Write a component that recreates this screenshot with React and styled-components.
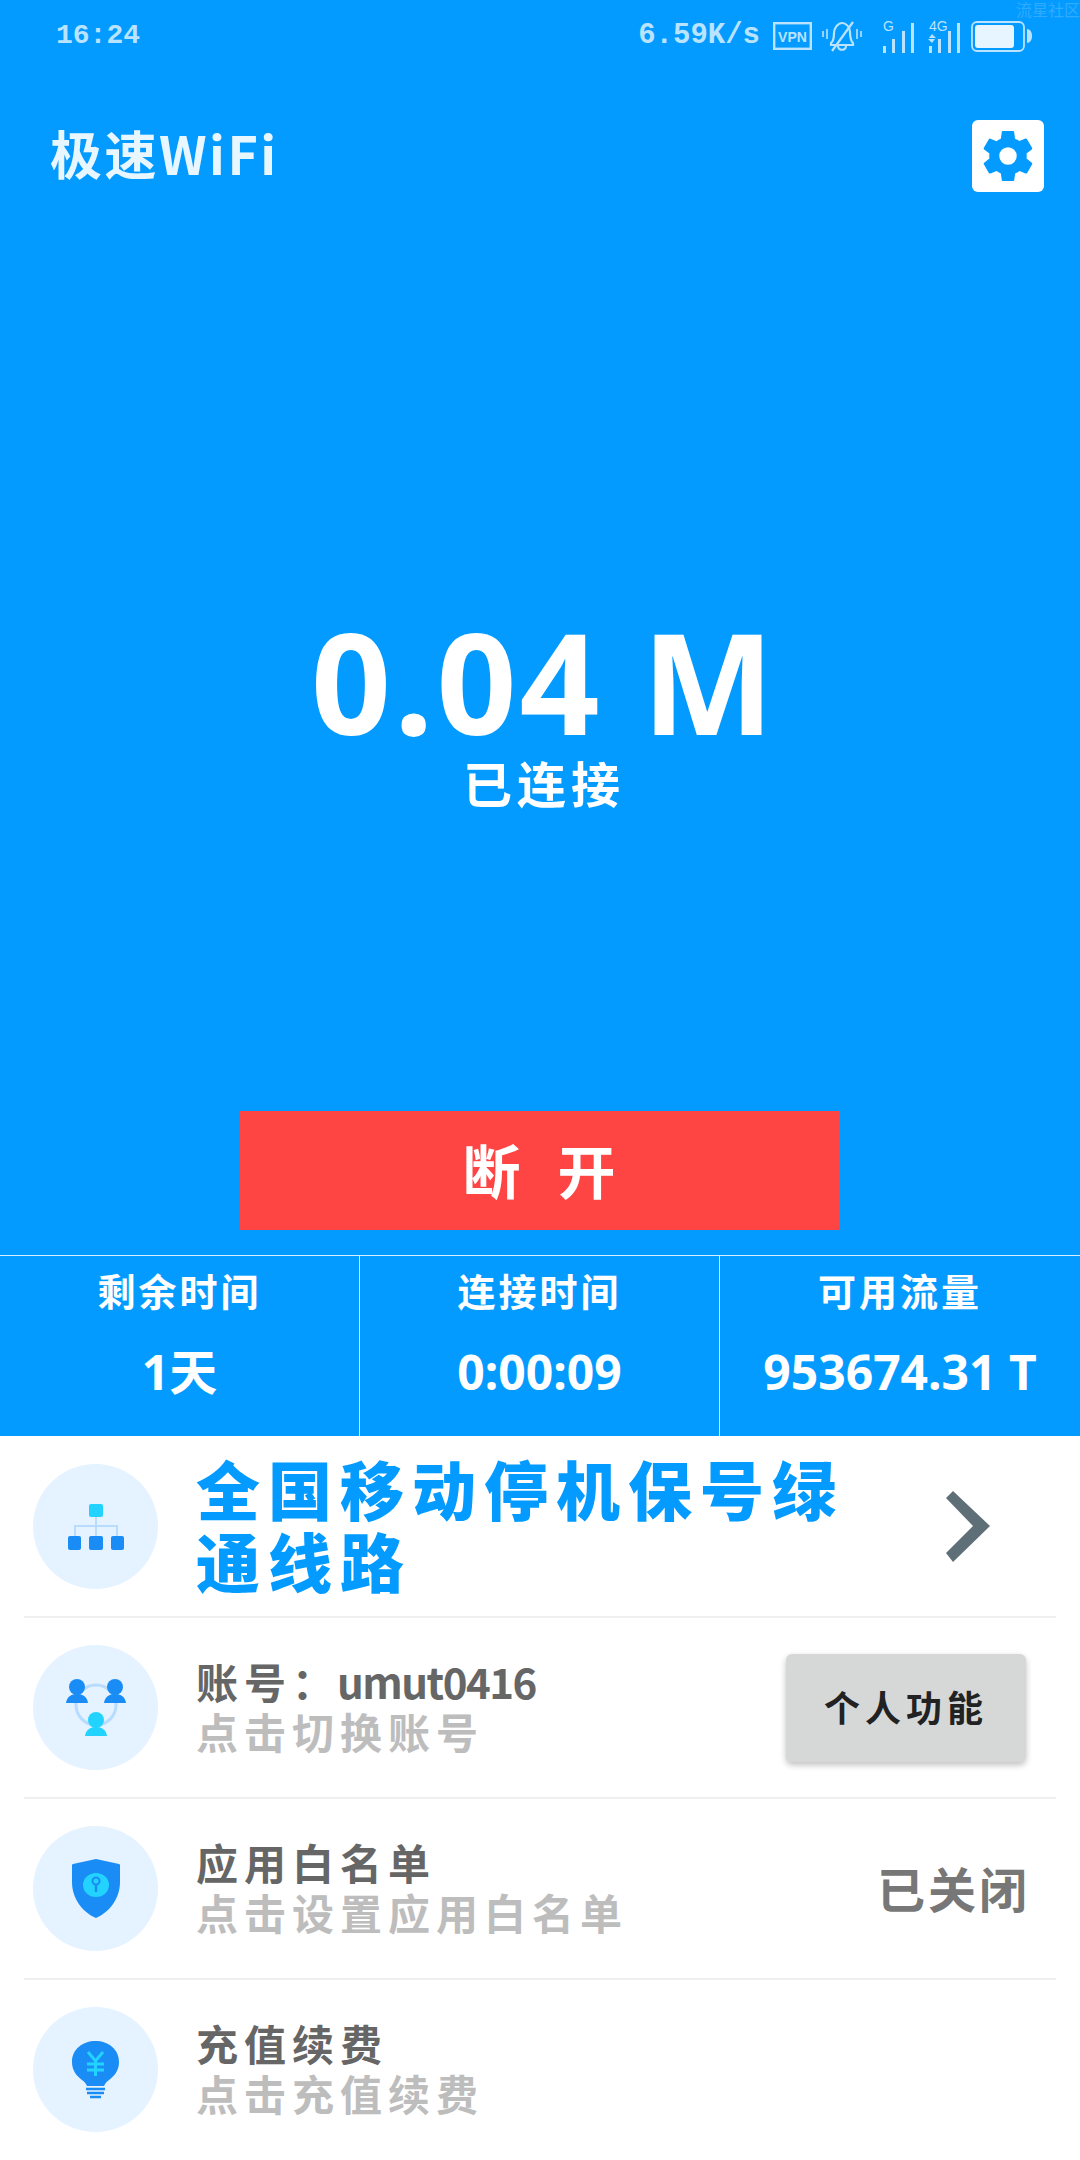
import React from 'react'
import styled, { createGlobalStyle } from 'styled-components'

const CJK = '"Noto Sans CJK SC", "Noto Sans", sans-serif'

const GlobalStyle = createGlobalStyle`
    html, body {
        margin: 0;
        padding: 0;
        background: #ffffff;
    }
    * {
        box-sizing: border-box;
    }
`

const Page = styled.div`
    width: 1080px;
    height: 2160px;
    display: flex;
    flex-direction: column;
    position: relative;
    overflow: hidden;
    font-family: ${CJK};
    background: #ffffff;
`

const Hero = styled.section`
    height: 1436px;
    flex: none;
    display: flex;
    flex-direction: column;
    background: #039bff;
    color: #ffffff;
`

const Watermark = styled.span`
    position: absolute;
    top: 0;
    right: 0;
    font-size: 16px;
    line-height: 18px;
    color: #2fabff;
`

const StatusBar = styled.div`
    height: 70px;
    flex: none;
    display: flex;
    align-items: center;
    justify-content: space-between;
    padding: 2px 48px 0 56px;
    color: #b9e3ff;
`

const StatusText = styled.span`
    font-family: "Liberation Mono", monospace;
    font-weight: 700;
    font-size: ${p => p.$size || 28}px;
    line-height: 34px;
    margin-right: ${p => p.$gap || 0}px;
`

const StatusIcons = styled.div`
    display: flex;
    align-items: center;
    gap: 10px;
`

const IconSlot = styled.span`
    display: flex;
    margin-right: ${p => p.$gap}px;
`

const Header = styled.header`
    height: 72px;
    margin-top: 50px;
    flex: none;
    display: flex;
    align-items: center;
    justify-content: space-between;
    padding: 0 36px 0 50px;
`

const AppTitle = styled.h1`
    margin: 0 0 6px;
    font-size: 52px;
    line-height: 66px;
    font-weight: 700;
    letter-spacing: 2.500px;
    color: #e8f6ff;
`

const GearBox = styled.div`
    width: 72px;
    height: 72px;
    display: flex;
    align-items: center;
    justify-content: center;
    background: #ffffff;
    border-radius: 6px;
`

const Speed = styled.div`
    margin-top: 424px;
    padding-left: 8px;
    text-align: center;
    font-family: "Noto Sans", sans-serif;
    font-weight: 700;
    font-size: 140px;
    line-height: 130px;
    letter-spacing: 3px;
`

const ConnState = styled.div`
    margin-top: 6px;
    padding-left: 8px;
    text-align: center;
    font-size: 49px;
    line-height: 60px;
    font-weight: 700;
    letter-spacing: 5px;
`

const Spacer = styled.div`
    flex: 1;
`

const DisconnectButton = styled.button`
    width: 600px;
    height: 119px;
    flex: none;
    align-self: center;
    margin-bottom: 25px;
    padding: 0 0 4px 10px;
    border: 0;
    border-radius: 0;
    background: #ff4444;
    color: #ffffff;
    font-family: ${CJK};
    font-size: 58px;
    font-weight: 700;
    letter-spacing: 12px;
`

const Stats = styled.div`
    height: 181px;
    flex: none;
    display: grid;
    grid-template-columns: repeat(3, 1fr);
    border-top: 1px solid #d6eeff;
`

const StatCell = styled.div`
    display: flex;
    flex-direction: column;
    align-items: center;
    padding-top: 9px;
    border-right: ${p => (p.$last ? '0' : '1px solid #d6eeff')};
`

const StatLabel = styled.div`
    font-size: 38px;
    line-height: 50px;
    font-weight: 700;
    letter-spacing: 3px;
`

const StatValue = styled.div`
    margin-top: 28px;
    font-family: "Noto Sans", ${CJK};
    font-size: 48px;
    line-height: 58px;
    font-weight: 700;
`

const List = styled.div`
    flex: 1;
    display: flex;
    flex-direction: column;
    padding: 1px 24px 0;
`

const Row = styled.div`
    height: ${p => (p.$last ? 179 : 181)}px;
    flex: none;
    display: flex;
    align-items: center;
    padding-left: 9px;
    border-bottom: ${p => (p.$last ? '0' : '2px solid #efefef')};
`

const IconCircle = styled.div`
    width: 125px;
    height: 125px;
    flex: none;
    display: flex;
    align-items: center;
    justify-content: center;
    border-radius: 50%;
    background: #e5f2ff;
`

const RowBody = styled.div`
    flex: 1;
    min-width: 0;
    margin-left: 38px;
    padding-bottom: 3px;
    display: flex;
    flex-direction: column;
`

const Promo = styled.div`
    width: 680px;
    margin-bottom: 5px;
    font-size: 64px;
    line-height: 72px;
    font-weight: 900;
    letter-spacing: 8px;
    color: #039bff;
`

const RowTitle = styled.div`
    font-size: 42px;
    line-height: 50px;
    font-weight: 700;
    letter-spacing: 6px;
    color: #666666;
`

const LatinPart = styled.span`
    margin-left: -3px;
    letter-spacing: -1.500px;
`

const RowSub = styled.div`
    font-size: 42px;
    line-height: 50px;
    font-weight: 700;
    letter-spacing: 6px;
    color: #bdbdbd;
`

const PersonalButton = styled.button`
    width: 240px;
    height: 108px;
    flex: none;
    margin-right: 30px;
    padding: 0 0 4px;
    border: 0;
    border-radius: 6px;
    background: #d6d8d8;
    box-shadow: 0 3px 6px rgba(0, 0, 0, 0.25);
    color: #222222;
    font-family: ${CJK};
    font-size: 36px;
    font-weight: 700;
    letter-spacing: 5px;
`

const RowStatus = styled.div`
    flex: none;
    margin: 0 26px 3px 0;
    font-size: 48px;
    line-height: 56px;
    font-weight: 700;
    letter-spacing: 3px;
    color: #777777;
`

const Chevron = styled.svg`
    flex: none;
    margin-right: 66px;
`

const VpnIcon = () => (
    <svg width="39" height="28" viewBox="0 0 39 28">
        <rect x="1.200" y="1.200" width="36.600" height="25.600" fill="none" stroke="currentColor" strokeWidth="2.400" />
        <text x="19.500" y="20" textAnchor="middle" fontFamily="Liberation Sans" fontSize="14" fontWeight="700" fill="currentColor">VPN</text>
    </svg>
)

const MutedBell = () => (
    <svg width="40" height="33" viewBox="0 0 40 33" fill="none" stroke="currentColor" strokeWidth="2.200">
        <path d="M9 23c3-2 3-6 3-10 0-5 4-10 8-10s8 4 8 9c0 5 1 9 3 11v2H9z" />
        <path d="M16 26c0 5 8 5 8 0" />
        <path d="M10 31L31 2" />
        <path d="M1 11v6M5 9v10M35 9v10M39 11v6" strokeWidth="1.600" />
    </svg>
)

const SignalBars = styled.svg`
    overflow: visible;
`

const SignalIcon = ({ label, arrows }) => (
    <SignalBars width="32" height="34" viewBox="0 0 32 34" fill="currentColor">
        <text x="0" y="12" fontFamily="Liberation Sans" fontSize="14" fontWeight="400">{label}</text>
        {arrows && <path d="M3 15l4 4H0zM3 24l-4-4h7z" />}
        <rect x="0" y="27" width="3" height="7" />
        <rect x="9" y="20" width="3" height="14" />
        <rect x="19" y="12" width="3" height="22" />
        <rect x="28" y="4" width="3" height="30" />
    </SignalBars>
)

const BatteryIcon = () => (
    <svg width="61" height="31" viewBox="0 0 61 31">
        <rect x="1" y="1" width="52" height="29" rx="5" fill="none" stroke="currentColor" strokeWidth="1.800" />
        <rect x="4" y="4" width="39" height="23" rx="3" fill="#e6f5ff" />
        <path d="M56 8c3 0 5 3 5 7s-2 7-5 7z" fill="currentColor" />
    </svg>
)

const GearIcon = () => (
    <svg width="60" height="60" viewBox="0 0 24 24" fill="#039bff">
        <path d="M19.4 13c.04-.33.1-.66.1-1s-.06-.67-.1-1l2.1-1.65c.2-.15.25-.42.12-.64l-2-3.46c-.12-.22-.39-.3-.61-.22l-2.49 1a7.3 7.3 0 0 0-1.69-.98l-.38-2.65A.49.49 0 0 0 14 2h-4c-.25 0-.46.18-.49.42l-.38 2.65c-.61.25-1.17.59-1.69.98l-2.49-1c-.23-.09-.49 0-.61.22l-2 3.46c-.13.22-.07.49.12.64L4.57 11c-.04.33-.07.66-.07 1s.03.67.07 1l-2.11 1.65c-.19.15-.24.42-.12.64l2 3.46c.12.22.39.3.61.22l2.49-1c.52.4 1.08.73 1.69.98l.38 2.65c.03.24.24.42.49.42h4c.25 0 .46-.18.49-.42l.38-2.65c.61-.25 1.17-.59 1.69-.98l2.49 1c.23.09.49 0 .61-.22l2-3.46c.12-.22.07-.49-.12-.64L19.4 13zM12 15.5a3.5 3.500 0 1 1 0-7 3.500 3.500 0 0 1 0 7z" />
    </svg>
)

const TreeIcon = () => (
    <svg width="56" height="46" viewBox="0 0 56 46">
        <path d="M28 12v22M7 34V22h42v12" fill="none" stroke="#b7dcff" strokeWidth="2" />
        <rect x="21" y="0" width="14" height="13" rx="2" fill="#22d3ff" />
        <rect x="0" y="32" width="13" height="14" rx="2" fill="#1a8cf5" />
        <rect x="21" y="32" width="14" height="14" rx="2" fill="#1a8cf5" />
        <rect x="43" y="32" width="13" height="14" rx="2" fill="#1a8cf5" />
    </svg>
)

const UsersIcon = () => (
    <svg width="60" height="57" viewBox="0 0 60 57">
        <circle cx="30" cy="26" r="20" fill="none" stroke="#b7dcff" strokeWidth="3" />
        <circle cx="11" cy="8" r="8" fill="#1a8cf5" />
        <path d="M0 24c1-7 6-9 11-9s10 2 11 9z" fill="#1a8cf5" />
        <circle cx="49" cy="8" r="8" fill="#1a8cf5" />
        <path d="M38 24c1-7 6-9 11-9s10 2 11 9z" fill="#1a8cf5" />
        <circle cx="30" cy="41" r="8" fill="#22d3ff" />
        <path d="M19 57c1-7 6-9 11-9s10 2 11 9z" fill="#22d3ff" />
    </svg>
)

const ShieldIcon = () => (
    <svg width="48" height="59" viewBox="0 0 48 59">
        <path d="M24 0l23 5c1 0 1 1 1 2v16c0 16-10 30-24 36C10 53 0 39 0 23V7c0-1 0-2 1-2z" fill="#1a8cf5" />
        <ellipse cx="24" cy="26" rx="13" ry="12" fill="#22d3ff" />
        <circle cx="24" cy="22" r="3.500" fill="none" stroke="#1a8cf5" strokeWidth="2" />
        <path d="M24 25v8" stroke="#1a8cf5" strokeWidth="2.400" />
    </svg>
)

const BulbIcon = () => (
    <svg width="47" height="58" viewBox="0 0 47 58">
        <path d="M23.500 0C36 0 47 8 47 21c0 9-5 14-10 18-3 2-4 4-5 6H15c-1-2-2-4-5-6C5 35 0 30 0 21 0 8 11 0 23.500 0z" fill="#1a8cf5" />
        <path d="M16 11l7.500 9 7.500-9M23.500 20v15M15 23h17M15 29h17" fill="none" stroke="#22d3ff" strokeWidth="3" />
        <path d="M14 48h19M15 52h17M18 56h11" stroke="#1a8cf5" strokeWidth="2.400" />
    </svg>
)

const stats = [
    { label: '剩余时间', value: '1天' },
    { label: '连接时间', value: '0:00:09' },
    { label: '可用流量', value: '953674.31 T' },
]

export default function App() {
    return (
        <Page>
            <GlobalStyle />
            <Hero>
                <Watermark>流星社区</Watermark>
                <StatusBar>
                    <StatusText>16:24</StatusText>
                    <StatusIcons>
                        <StatusText $size={29} $gap={3}>6.59K/s</StatusText>
                        <VpnIcon />
                        <IconSlot $gap={11}><MutedBell /></IconSlot>
                        <IconSlot $gap={4}><SignalIcon label="G" /></IconSlot>
                        <SignalIcon label="4G" arrows />
                        <BatteryIcon />
                    </StatusIcons>
                </StatusBar>
                <Header>
                    <AppTitle>极速WiFi</AppTitle>
                    <GearBox><GearIcon /></GearBox>
                </Header>
                <Speed>0.04 M</Speed>
                <ConnState>已连接</ConnState>
                <Spacer />
                <DisconnectButton>断 开</DisconnectButton>
                <Stats>
                    {stats.map((s, i) => (
                        <StatCell key={s.label} $last={i === 2}>
                            <StatLabel>{s.label}</StatLabel>
                            <StatValue>{s.value}</StatValue>
                        </StatCell>
                    ))}
                </Stats>
            </Hero>
            <List>
                <Row>
                    <IconCircle><TreeIcon /></IconCircle>
                    <RowBody><Promo>全国移动停机保号绿通线路</Promo></RowBody>
                    <Chevron width="44" height="71" viewBox="0 0 44 71">
                        <path d="M0 7L7 0l37 35L7 71l-7-9 27-27z" fill="#5f6f77" />
                    </Chevron>
                </Row>
                <Row>
                    <IconCircle><UsersIcon /></IconCircle>
                    <RowBody>
                        <RowTitle>账号：<LatinPart>umut0416</LatinPart></RowTitle>
                        <RowSub>点击切换账号</RowSub>
                    </RowBody>
                    <PersonalButton>个人功能</PersonalButton>
                </Row>
                <Row>
                    <IconCircle><ShieldIcon /></IconCircle>
                    <RowBody>
                        <RowTitle>应用白名单</RowTitle>
                        <RowSub>点击设置应用白名单</RowSub>
                    </RowBody>
                    <RowStatus>已关闭</RowStatus>
                </Row>
                <Row $last>
                    <IconCircle><BulbIcon /></IconCircle>
                    <RowBody>
                        <RowTitle>充值续费</RowTitle>
                        <RowSub>点击充值续费</RowSub>
                    </RowBody>
                </Row>
            </List>
        </Page>
    )
}
